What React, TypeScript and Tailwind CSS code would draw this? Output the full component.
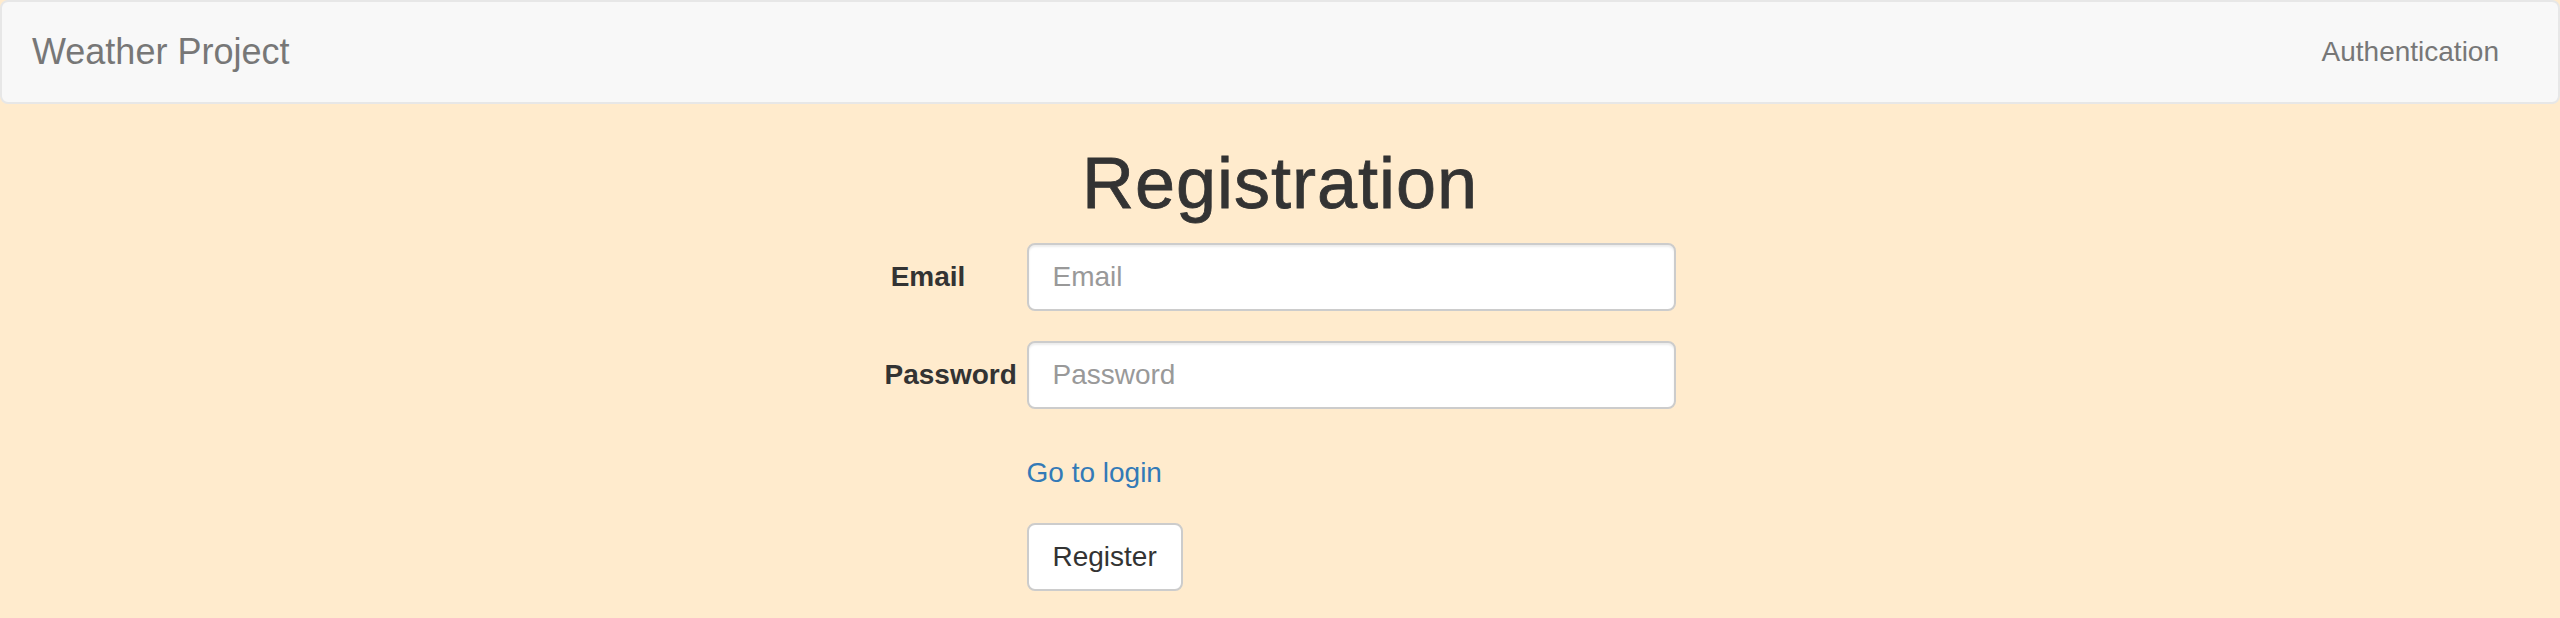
import React, { useState } from 'react';

const Navbar: React.FC = () => (
  <nav className="flex h-[104px] items-center justify-between rounded-lg border-2 border-[#e7e7e7] bg-[#f8f8f8]">
    <a href="#" className="pl-[30px] text-[36px] leading-[40px] text-[#777]">
      Weather Project
    </a>
    <a href="#" className="pr-[59px] text-[28px] leading-[40px] text-[#777]">
      Authentication
    </a>
  </nav>
);

interface FieldProps {
  label: string;
  type: string;
  value: string;
  onChange: (value: string) => void;
}

const Field: React.FC<FieldProps> = ({ label, type, value, onChange }) => (
  <div className="mb-[30px] flex items-center">
    <label className="w-[87px] whitespace-nowrap text-center text-[28px] font-bold leading-[40px] text-[#333]">
      {label}
    </label>
    <input
      type={type}
      value={value}
      onChange={(e) => onChange(e.target.value)}
      placeholder={label}
      className="ml-[55px] h-[68px] w-[649px] rounded-lg border-2 border-[#ccc] bg-white px-6 py-3 text-[28px] leading-[40px] text-[#555] shadow-[inset_0_2px_2px_rgba(0,0,0,0.075)] outline-none placeholder:text-[#999]"
    />
  </div>
);

export default function App() {
  const [email, setEmail] = useState('');
  const [password, setPassword] = useState('');

  return (
    <div className="min-h-screen bg-[#ffebcd] font-['Liberation_Sans',Arial,sans-serif]">
      <Navbar />
      <h1 className="mt-10 mb-5 text-center text-[72px] font-medium leading-[79px] tracking-[1px] text-[#333] [-webkit-text-stroke:0.8px_#333]">
        Registration
      </h1>
      <form className="mx-auto w-[791px]" onSubmit={(e) => e.preventDefault()}>
        <Field label="Email" type="email" value={email} onChange={setEmail} />
        <Field label="Password" type="password" value={password} onChange={setPassword} />
        <div className="mb-[30px] ml-[142px] pt-[14px]">
          <a href="#" className="text-[28px] leading-[40px] text-[#337ab7]">
            Go to login
          </a>
        </div>
        <div className="ml-[142px]">
          <button
            type="submit"
            className="rounded-lg border-2 border-[#ccc] bg-white px-6 py-3 text-[28px] leading-[40px] text-[#333]"
          >
            Register
          </button>
        </div>
      </form>
    </div>
  );
}
